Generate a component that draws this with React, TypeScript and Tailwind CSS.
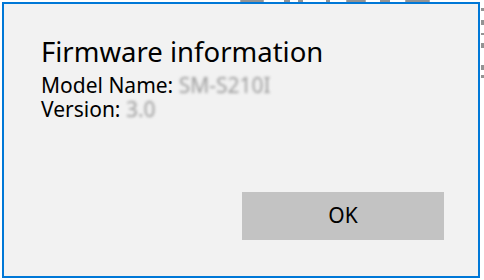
import React from "react";

// scraps of the window lying behind the dialog
const Backdrop = () => (
  <svg className="absolute left-0 top-0" width="484" height="280" viewBox="0 0 484 280">
    <g fill="#939393">
      <rect x="240" y="0" width="24" height="2" rx="1" />
      <rect x="284" y="0" width="6" height="2" />
      <rect x="298" y="0" width="5" height="2" />
      <rect x="326" y="0" width="4" height="2" />
      <rect x="346" y="0" width="20" height="2" rx="1" />
      <rect x="380" y="0" width="10" height="2" />
      <rect x="405" y="0" width="25" height="2" rx="1" />
      <rect x="481" y="8" width="3" height="3" />
      <rect x="481" y="20" width="3" height="5" />
      <rect x="481" y="33" width="3" height="2" />
      <rect x="481" y="43" width="3" height="5" />
      <rect x="481" y="65" width="3" height="5" />
      <rect x="481" y="75" width="3" height="3" />
    </g>
  </svg>
);

const App = () => {
  return (
    <div className="relative w-[484px] h-[280px] overflow-hidden bg-white font-['Noto_Sans',sans-serif]">
      <Backdrop />
      <div className="relative ml-[2px] mt-[2px] w-[478px] h-[276px] border-2 border-[#0078d7] bg-[#f2f2f2] flex flex-col">
        <div className="pl-[37px] pt-[32px]">
          <h1 className="text-[27.5px] leading-[32px] text-black">Firmware information</h1>
          <div className="mt-[5px] text-[21px] leading-[24px] text-black">
            <p>
              Model Name: <span className="text-[#9c9c9c] blur-[1.4px]">SM-S210I</span>
            </p>
            <p>
              Version: <span className="text-[#9c9c9c] blur-[1.4px]">3.0</span>
            </p>
          </div>
        </div>
        <div className="mt-auto mb-[36px] mr-[34px] self-end">
          <button className="w-[202px] h-[48px] bg-[#c3c3c3] text-[21px] text-black flex items-center justify-center">
            OK
          </button>
        </div>
      </div>
    </div>
  );
};

export default App;
